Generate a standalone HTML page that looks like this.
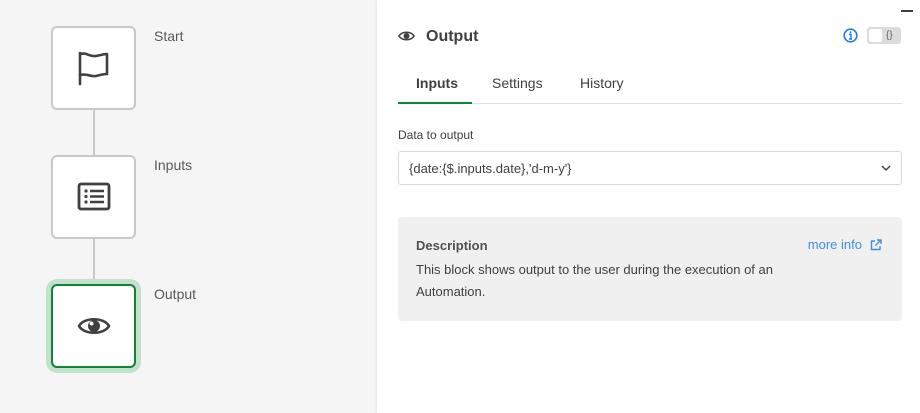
<!DOCTYPE html>
<html><head><meta charset="utf-8"><style>
*{box-sizing:border-box;margin:0;padding:0}
body{width:920px;height:413px;background:#f5f5f5;font-family:"Liberation Sans",sans-serif;position:relative;overflow:hidden;color:#404040}
.node{position:absolute;left:51px;width:85px;height:84px;background:#fff;border:2px solid #c8c8c8;border-radius:6px;display:flex;align-items:center;justify-content:center}
.lbl{position:absolute;left:154px;font-size:14px;color:#595959}
.line{position:absolute;left:93px;width:2px;background:#c8c8c8}
.panel{position:absolute;left:377px;top:0;width:543px;height:413px;background:#fff;box-shadow:-1px 0 3px rgba(0,0,0,.08)}
.tab{position:absolute;top:75px;font-size:14px;color:#404040}
</style></head><body>
<div class="line" style="top:110px;height:46px"></div>
<div class="line" style="top:239px;height:47px"></div>
<div class="node" style="top:26px">
<svg width="36" height="36" viewBox="0 0 36 36" fill="none" stroke="#404040" stroke-width="2.6" stroke-linecap="round" stroke-linejoin="round"><path d="M4 34V3"/><path d="M4 4c7-2 9 3 16 2 5-1 8-2 11-2v20c-4 0-7 1-11 2-6 1-9-3-16-1"/></svg></div>
<div class="node" style="top:155px">
<svg width="34" height="30" viewBox="0 0 34 30" fill="none" stroke="#404040"><rect x="2" y="2" width="30" height="25" rx="2" stroke-width="2.8"/><g fill="#404040" stroke="none"><circle cx="9" cy="9" r="1.6"/><circle cx="9" cy="14.5" r="1.6"/><circle cx="9" cy="20" r="1.6"/></g><path d="M13 9h14M13 14.5h14M13 20h14" stroke-width="2.4"/></svg></div>
<div class="node" style="top:284px;border-color:#128236;box-shadow:0 0 0 5px #c3e2cc">
<svg width="34" height="22" viewBox="0 0 34 22"><path d="M2 11C7 2 27 2 32 11C27 20 7 20 2 11Z" fill="none" stroke="#404040" stroke-width="2.6"/><circle cx="17" cy="11" r="6" fill="#404040"/><circle cx="14.5" cy="8.5" r="2" fill="#fff"/></svg></div>
<div class="lbl" style="top:28px">Start</div>
<div class="lbl" style="top:157px">Inputs</div>
<div class="lbl" style="top:286px">Output</div>
<div class="panel">
<div style="position:absolute;right:7px;top:10px;width:12px;height:1.5px;background:#404040"></div>
<svg style="position:absolute;left:21px;top:30px" width="17" height="12" viewBox="0 0 17 12"><path d="M1 6C4 1 13 1 16 6C13 11 4 11 1 6Z" fill="none" stroke="#404040" stroke-width="1.6"/><circle cx="8.5" cy="6" r="3" fill="#404040"/></svg>
<div style="position:absolute;left:49px;top:28px;font-size:16px;font-weight:bold;color:#404040">Output</div>
<svg style="position:absolute;left:466px;top:28px" width="15" height="15" viewBox="0 0 15 15"><circle cx="7.5" cy="7.5" r="6.3" fill="none" stroke="#1d79e6" stroke-width="1.6"/><circle cx="7.5" cy="4.3" r="1" fill="#1d79e6"/><path d="M6 6.5h2v4.5M6 11h3" stroke="#1d79e6" stroke-width="1.4" fill="none"/></svg>
<div style="position:absolute;left:490px;top:27px;width:34px;height:17px;border-radius:3px;background:#dcdcdc">
<div style="position:absolute;left:2px;top:2px;width:13px;height:13px;background:#fff;border-radius:2px"></div>
<div style="position:absolute;left:19px;top:2px;font-size:10px;line-height:13px;color:#666">{}</div></div>
<div class="tab" style="left:39px;font-weight:bold">Inputs</div>
<div class="tab" style="left:115px">Settings</div>
<div class="tab" style="left:203px">History</div>
<div style="position:absolute;left:21px;top:103px;width:504px;height:1px;background:#e0e0e0"></div>
<div style="position:absolute;left:21px;top:102px;width:74px;height:2px;background:#128236"></div>
<div style="position:absolute;left:21px;top:128px;font-size:12px;color:#404040">Data to output</div>
<div style="position:absolute;left:21px;top:151px;width:504px;height:34px;border:1px solid #d9d9d9;border-radius:3px;font-size:13px;color:#404040;padding:9px 10px">{date:{$.inputs.date},'d-m-y'}
<svg style="position:absolute;right:10px;top:13px" width="10" height="7" viewBox="0 0 10 7"><path d="M1 1l4 4 4-4" fill="none" stroke="#404040" stroke-width="1.5"/></svg></div>
<div style="position:absolute;left:21px;top:217px;width:504px;height:104px;background:#f0f0f0;border-radius:4px">
<div style="position:absolute;left:18px;top:21px;font-size:13px;font-weight:bold;color:#505050">Description</div>
<div style="position:absolute;right:40px;top:20px;font-size:13px;color:#3f8fe0">more info</div>
<svg style="position:absolute;right:20px;top:22px" width="12" height="12" viewBox="0 0 12 12" fill="none" stroke="#3f8fe0" stroke-width="1.4"><path d="M5 2H1.5v8.5H10V7M7 1h4v4M11 1L5.5 6.5"/></svg>
<div style="position:absolute;left:18px;top:42px;width:420px;font-size:13px;line-height:22px;color:#404040">This block shows output to the user during the execution of an Automation.</div>
</div>
</div>
</body></html>
